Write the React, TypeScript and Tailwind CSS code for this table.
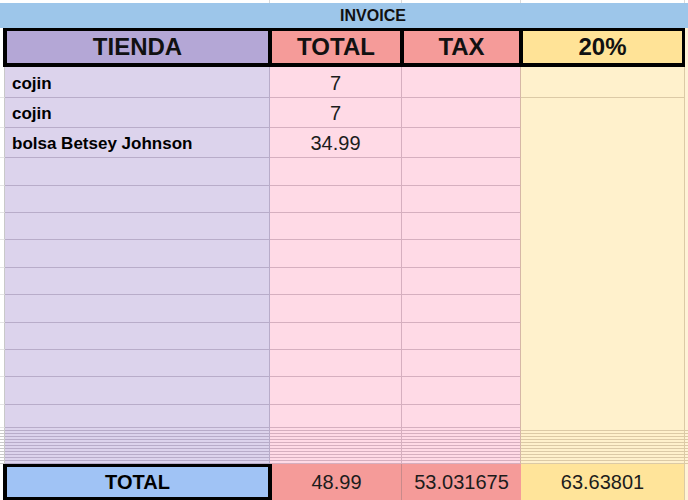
const font = "font-['Liberation_Sans',Arial,sans-serif]";

const rowHeights = [31, 30, 30, 28, 27, 27, 28, 27, 28, 27, 27, 28, 23];

const items: { name: string; total: string }[] = [
  { name: "cojin", total: "7" },
  { name: "cojin", total: "7" },
  { name: "bolsa Betsey Johnson", total: "34.99" },
];

function DataRow({ h, index }: { h: number; index: number }) {
  const item = items[index];
  // the 20% column only shows a gridline under the first row
  const yellowLine = index === 0;
  return (
    <div className="grid grid-cols-[5px_265px_132px_119px_164px_3px] overflow-hidden" style={{ height: h }}>
      <div className="border-r border-b border-r-[#c9c9c9] border-b-[#e4e4e4] bg-white" />
      <div className="flex items-center overflow-hidden border-r border-b border-[#b8acc9] bg-[#dcd3ec] pt-[2px] pl-[7px] text-[17px] leading-none font-bold text-black">
        {item?.name}
      </div>
      <div className="flex items-center justify-center overflow-hidden border-r border-b border-[#d6afbf] bg-[#ffdae6] pt-[1px] text-[20px] leading-none text-[#1c1c1c]">
        {item?.total}
      </div>
      <div className="border-r border-b border-r-[#d6b7a6] border-b-[#d6afbf] bg-[#ffdae6]" />
      <div
        className={
          yellowLine
            ? "border-r border-b border-[#dccaa6] bg-[#fff1cc]"
            : "border-r border-[#dccaa6] bg-[#fff1cc]"
        }
      />
      <div className="bg-[#fff3d6]" />
    </div>
  );
}

function ThinRow() {
  return (
    <div className="grid h-[3px] grid-cols-[5px_265px_132px_119px_164px_3px]">
      <div className="border-r border-b border-[#c9c9c9] bg-white" />
      <div className="border-r border-b border-[#b8acc9] bg-[#dcd3ec]" />
      <div className="border-r border-b border-[#d6afbf] bg-[#ffdae6]" />
      <div className="border-r border-b border-r-[#d6b7a6] border-b-[#d6afbf] bg-[#ffdae6]" />
      <div className="border-r border-b border-[#dccaa6] bg-[#fff1cc]" />
      <div className="border-b border-[#dccaa6] bg-[#fff3d6]" />
    </div>
  );
}

export default function App() {
  return (
    <div className={`${font} flex h-[500px] w-[688px] flex-col overflow-hidden bg-white`}>
      {/* sheet chrome above the table */}
      <div className="grid h-[3px] shrink-0 grid-cols-[270px_132px_119px_164px_3px]">
        <div className="border-r border-[#dadada]" />
        <div className="border-r border-[#dadada]" />
        <div className="border-r border-[#dadada]" />
        <div className="border-r border-[#dadada]" />
        <div />
      </div>

      <div className="flex h-[25px] shrink-0 items-center justify-center bg-[#9dc6ea] pt-[1px] pl-[58px] text-[16px] leading-none font-bold text-[#111]">
        INVOICE
      </div>

      <div className="flex h-[39px] shrink-0">
        <div className="w-[3px] bg-white" />
        <div className="flex w-[682px] gap-[4px] bg-black pt-[3px] pr-[3px] pb-[4px] pl-[4px] text-[24px] leading-none font-bold text-[#111]">
          <div className="flex w-[261px] items-center justify-center bg-[#b4a7d6]">TIENDA</div>
          <div className="flex w-[128px] items-center justify-center bg-[#f59b99]">TOTAL</div>
          <div className="flex w-[115px] items-center justify-center bg-[#f59b99]">TAX</div>
          <div className="flex w-[159px] items-center justify-center bg-[#ffe397]">20%</div>
        </div>
        <div className="w-[3px] bg-[#fff3d6]" />
      </div>

      {rowHeights.map((h, i) => (
        <DataRow key={i} h={h} index={i} />
      ))}

      {Array.from({ length: 12 }).map((_, i) => (
        <ThinRow key={i} />
      ))}

      <div className="grid h-[36px] shrink-0 grid-cols-[3px_269px_130px_119px_164px_3px] text-[20px] leading-none text-[#1c1c1c]">
        <div className="bg-white" />
        <div className="flex items-center justify-center border-x-4 border-y-[3px] border-black bg-[#a0c3f5] font-bold text-black">
          TOTAL
        </div>
        <div className="flex items-center justify-center border-r border-[#c98a8a] bg-[#f59b99]">48.99</div>
        <div className="flex items-center justify-center bg-[#f59b99]">53.031675</div>
        <div className="flex items-center justify-center border-r border-[#dccaa6] bg-[#ffe49a]">63.63801</div>
        <div className="bg-[#fff3d6]" />
      </div>
    </div>
  );
}
